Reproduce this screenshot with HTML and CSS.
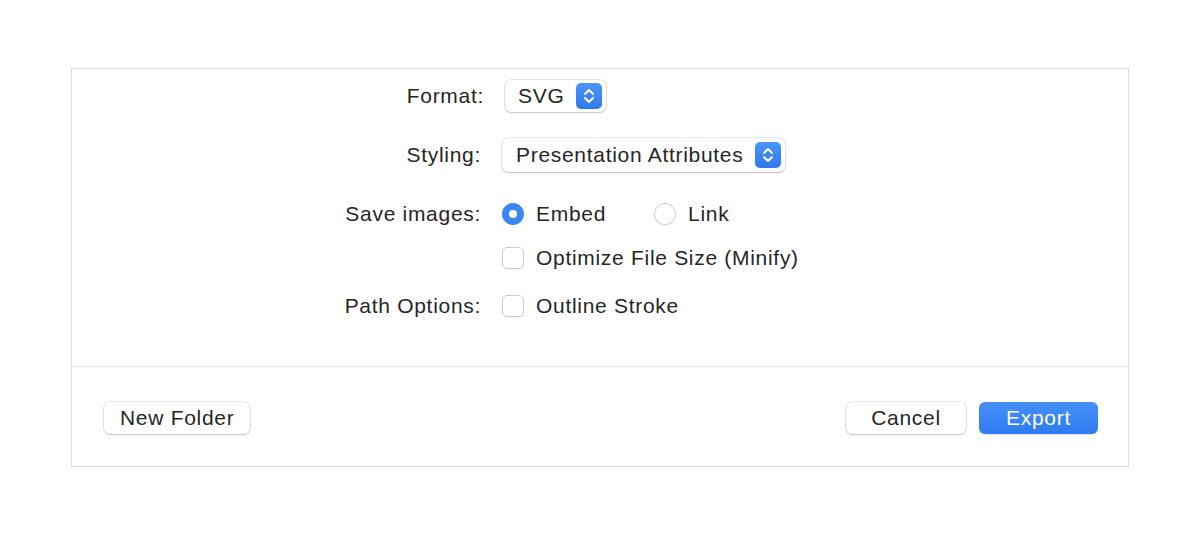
FILE: index.html
```html
<!DOCTYPE html>
<html lang="en">
<head>
  <meta charset="UTF-8" />
  <title>Export</title>
  <link rel="stylesheet" href="styles.css">
</head>
<body>

  <div class="dialog">
    <div class="options">
      <div class="label label-format">Format:</div>
      <div class="control">
        <div class="popup popup-format">
          <span>SVG</span>
          <span class="stepper">
            <svg width="26" height="26" viewBox="0 0 26 26"><path d="M9 11l4-4 4 4M9 15l4 4 4-4" fill="none" stroke="#fff" stroke-width="2" stroke-linecap="round" stroke-linejoin="round"/></svg>
          </span>
        </div>
      </div>

      <div class="label">Styling:</div>
      <div class="control">
        <div class="popup">
          <span>Presentation Attributes</span>
          <span class="stepper">
            <svg width="26" height="26" viewBox="0 0 26 26"><path d="M9 11l4-4 4 4M9 15l4 4 4-4" fill="none" stroke="#fff" stroke-width="2" stroke-linecap="round" stroke-linejoin="round"/></svg>
          </span>
        </div>
      </div>

      <div class="label">Save images:</div>
      <div class="control">
        <div class="option embed"><span class="radio checked"></span>Embed</div>
        <div class="option"><span class="radio"></span>Link</div>
      </div>

      <div class="label"></div>
      <div class="control">
        <div class="option"><span class="checkbox"></span>Optimize File Size (Minify)</div>
      </div>

      <div class="label">Path Options:</div>
      <div class="control">
        <div class="option"><span class="checkbox"></span>Outline Stroke</div>
      </div>
    </div>

    <div class="footer">
      <button class="btn">New Folder</button>
      <div class="spacer"></div>
      <button class="btn btn-cancel">Cancel</button>
      <button class="btn btn-primary">Export</button>
    </div>
  </div>

</body>
</html>
```

FILE: styles.css
```css
body {
  margin: 0;
  background: #fff;
  font-family: "Liberation Sans", Arial, sans-serif;
  font-size: 21px;
  letter-spacing: 0.7px;
  color: #262626;
}

.dialog {
  margin: 68px 0 0 71px;
  width: 1056px;
  border: 1px solid #dcdcdc;
}

.options {
  display: grid;
  grid-template-columns: 409px 1fr;
  grid-template-rows: 54px 64px 54px 34px 62px;
  column-gap: 21px;
  align-items: center;
  height: 298px;
  box-sizing: border-box;
  border-bottom: 1px solid #e2e2e2;
}

.label {
  text-align: right;
}

.label-format {
  margin-right: -3px;
}

.control {
  display: flex;
  align-items: center;
}

.popup {
  display: flex;
  align-items: center;
  height: 34px;
  padding: 0 4px 0 14px;
  border-radius: 6px;
  background: #fff;
  box-shadow: 0 0 0 0.5px rgba(0, 0, 0, 0.16), 0 1px 2px rgba(0, 0, 0, 0.18);
  box-sizing: border-box;
}

.popup-format {
  margin-left: 3px;
  height: 32px;
  padding-left: 13px;
}

.popup-format .stepper {
  margin-left: 10px;
}

.popup .stepper {
  margin-left: 12px;
  width: 26px;
  height: 26px;
  border-radius: 5px;
  background: linear-gradient(#4b96f9, #2f79ee);
}

.popup .stepper svg {
  display: block;
}

.option {
  display: flex;
  align-items: center;
}

.option.embed {
  margin-right: 48px;
}

.radio {
  width: 22px;
  height: 22px;
  margin-right: 12px;
  border-radius: 50%;
  box-sizing: border-box;
  border: 1px solid #cfcfcf;
  background: #fff;
  box-shadow: 0 1px 1px rgba(0, 0, 0, 0.06);
}

.radio.checked {
  border: 7px solid #3c87f5;
  box-shadow: none;
}

.checkbox {
  width: 22px;
  height: 22px;
  margin-right: 12px;
  border-radius: 5px;
  box-sizing: border-box;
  border: 1px solid #cdcdcd;
  background: #fff;
  box-shadow: 0 1px 1px rgba(0, 0, 0, 0.06);
}

.footer {
  display: flex;
  align-items: center;
  height: 99px;
  padding: 2px 30px 0 32px;
  box-sizing: border-box;
}

.spacer {
  flex: 1;
}

.btn {
  height: 32px;
  padding: 0 16px;
  border: none;
  border-radius: 6px;
  background: #fff;
  font-family: inherit;
  font-size: 21px;
  letter-spacing: 0.7px;
  color: #262626;
  box-shadow: 0 0 0 0.5px rgba(0, 0, 0, 0.16), 0 1px 2px rgba(0, 0, 0, 0.18);
}

.btn-cancel {
  width: 120px;
  margin-right: 13px;
}

.btn-primary {
  width: 119px;
  color: #fff;
  background: linear-gradient(#4590f8, #2f7bf0);
  box-shadow: 0 1px 1px rgba(0, 0, 0, 0.1);
}
```
